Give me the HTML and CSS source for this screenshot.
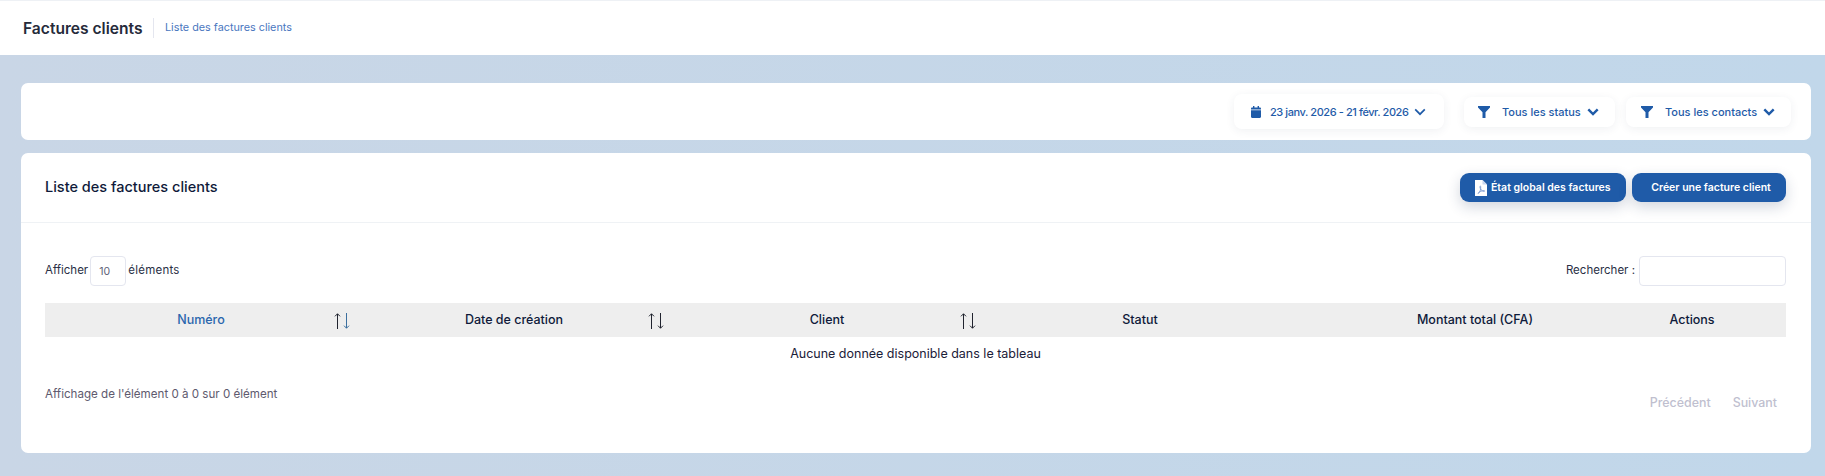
FILE: index.html
```html
<!DOCTYPE html>
<html lang="fr">
<head>
<meta charset="utf-8">
<title>Factures clients</title>
<link rel="stylesheet" href="styles.css">
</head>
<body>
<header class="topbar">
  <h1 class="page-title">Factures clients</h1>
  <span class="crumb">Liste des factures clients</span>
</header>
<main class="content">
  <section class="card filters">
    <button class="filter filter-date">
      <svg class="ico-cal" viewBox="0 0 10 12"><path d="M2 0h1.400v1.400h3.200V0H8v1.400h.8c.7 0 1.200.5 1.200 1.200V3.600H0V2.600c0-.7.5-1.200 1.200-1.200H2zM0 4.300h10v6.500c0 .7-.5 1.200-1.200 1.200H1.200C.5 12 0 11.500 0 10.800z"/></svg>
      <span class="filter-text">23 janv. 2026 - 21 févr. 2026</span>
      <svg class="ico-chev thin" viewBox="0 0 12 8"><path d="M1.200 1.400 6 6.200l4.800-4.800"/></svg>
    </button>
    <button class="filter filter-status">
      <svg class="ico-funnel" viewBox="0 0 12 12"><path d="M0 0h12v1.500L7.500 6.300V12H4.500V6.300L0 1.500z"/></svg>
      <span class="filter-text">Tous les status</span>
      <svg class="ico-chev" viewBox="0 0 12 8"><path d="M1.300 1.300 6 6l4.700-4.700"/></svg>
    </button>
    <button class="filter filter-contact">
      <svg class="ico-funnel" viewBox="0 0 12 12"><path d="M0 0h12v1.500L7.500 6.300V12H4.500V6.300L0 1.500z"/></svg>
      <span class="filter-text">Tous les contacts</span>
      <svg class="ico-chev" viewBox="0 0 12 8"><path d="M1.300 1.300 6 6l4.700-4.700"/></svg>
    </button>
  </section>

  <section class="card list">
    <div class="list-head">
      <h2 class="list-title">Liste des factures clients</h2>
      <div class="actions">
        <button class="btn btn-pdf">
          <svg class="ico-pdf" viewBox="0 0 12 16"><path fill="#fff" d="M0 0h7.500L12 4.500V16H0z"/><path fill="#c9d6ee" d="M7.500 0v4.500H12z"/><path fill="none" stroke="#7d9bd0" stroke-width=".9" d="M3 13.500c1.800-1 3-4 2.700-6.800-.1-1-.9-.8-.8.300.3 2.200 2 4.200 4 4.400 1 .1 1-.8 0-.8-2-.1-4.500 1-5.900 2.900z"/></svg>
          <span>État global des factures</span>
        </button>
        <button class="btn btn-new">Créer une facture client</button>
      </div>
    </div>
    <div class="list-body">
      <div class="controls">
        <label class="length"><span class="lbl">Afficher</span><span class="select-box">10</span><span class="lbl lbl-wide">éléments</span></label>
        <label class="search"><span class="lbl">Rechercher :</span><span class="search-box"></span></label>
      </div>
      <table class="grid">
        <colgroup>
          <col class="c1"><col class="c2"><col class="c3"><col class="c4"><col class="c5"><col class="c6">
        </colgroup>
        <thead>
          <tr>
            <th class="sorted">Numéro
              <svg class="sort" viewBox="0 0 16 16"><path class="up" d="M3.500 16V.8M1 3.300 3.500.8 6 3.300"/><path class="down" d="M12.500 0v15.200M10 12.700l2.500 2.500 2.500-2.500"/></svg>
            </th>
            <th>Date de création
              <svg class="sort" viewBox="0 0 16 16"><path class="up" d="M3.500 16V.8M1 3.300 3.500.8 6 3.300"/><path class="up" d="M12.500 0v15.200M10 12.700l2.500 2.500 2.500-2.500"/></svg>
            </th>
            <th>Client
              <svg class="sort" viewBox="0 0 16 16"><path class="up" d="M3.500 16V.8M1 3.300 3.500.8 6 3.300"/><path class="up" d="M12.500 0v15.200M10 12.700l2.500 2.500 2.500-2.500"/></svg>
            </th>
            <th>Statut</th>
            <th class="amount">Montant total (CFA)</th>
            <th>Actions</th>
          </tr>
        </thead>
        <tbody>
          <tr><td colspan="6">Aucune donnée disponible dans le tableau</td></tr>
        </tbody>
      </table>
      <div class="table-foot">
        <div class="info">Affichage de l'élément 0 à 0 sur 0 élément</div>
        <nav class="pager"><span>Précédent</span><span>Suivant</span></nav>
      </div>
    </div>
  </section>
</main>
</body>
</html>
```
FILE: styles.css
```css
* { box-sizing: border-box; }
html, body { margin: 0; height: 100%; }
body {
  font-family: Inter, "Open Sans", Arial, sans-serif;
  background: linear-gradient(90deg, #c9d6e6 0%, #c1d7ea 100%);
  color: #181c32;
  overflow: hidden;
}
.topbar {
  height: 55px;
  background: #fff;
  border-top: 1px solid #eef1f5;
  display: flex;
  align-items: center;
  padding: 0 0 0 23px;
}
.page-title {
  margin: 0;
  font-size: 15.600px;
  font-weight: 600;
  color: #252a3a;
  width: 130px;
  white-space: nowrap;
}
.crumb {
  border-left: 1px solid #e4e6ef;
  height: 20px;
  line-height: 20px;
  padding-left: 11px;
  font-size: 10.800px;
  color: #4a77c0;
}
.content {
  padding: 28px 14px 0 21px;
  display: flex;
  flex-direction: column;
  gap: 13px;
}
.card {
  background: #fff;
  border-radius: 7px;
}
.filters {
  height: 57px;
  display: flex;
  align-items: center;
  justify-content: flex-end;
  padding-right: 20px;
}
.filter {
  font: 500 11px Inter, Arial, sans-serif;
  color: #1f5ba8;
  background: #fff;
  border: 0;
  border-radius: 8px;
  box-shadow: 0 2px 10px rgba(40, 60, 90, .07);
  display: flex;
  align-items: center;
  padding: 0;
  white-space: nowrap;
}
.filter-date { width: 210px; height: 35px; padding-left: 17px; margin-right: 20px; }
.filter-status { width: 151px; height: 30px; padding-left: 14px; margin-right: 11px; }
.filter-contact { width: 165px; height: 30px; padding-left: 15px; }
.ico-cal { flex: none; width: 10px; height: 12px; fill: #1f5ba8; margin-right: 9px; }
.ico-funnel { flex: none; width: 12px; height: 12px; fill: #1f5ba8; margin-right: 12px; }
.ico-chev { flex: none; width: 12px; height: 8px; fill: none; stroke: #1f5ba8; stroke-width: 2.400; margin-left: 9px; }
.ico-chev.thin { stroke-width: 1.700; margin-left: 6px; }
.filter-text { flex: none; }
.filter-date .filter-text { width: 138px; letter-spacing: -.42px; }
.filter-status .filter-text { width: 76px; }
.filter-contact .filter-text { width: 89px; }
.list { height: 300px; }
.list-head {
  height: 70px;
  border-bottom: 1px solid #eff2f5;
  display: flex;
  align-items: center;
  justify-content: space-between;
  padding: 0 25px 0 24px;
}
.list-title {
  margin: 0 0 2px;
  font-size: 14.500px;
  font-weight: 500;
  color: #0f1a3a;
}
.actions { display: flex; gap: 6px; }
.btn {
  font: 600 10.500px Inter, Arial, sans-serif;
  color: #fff;
  background: #1f5ba8;
  border: 0;
  border-radius: 9px;
  height: 29px;
  display: flex;
  align-items: center;
  white-space: nowrap;
  box-shadow: 0 5px 14px rgba(30, 50, 90, .2);
}
.btn-pdf { width: 166px; padding: 0 0 0 15px; }
.btn-new { width: 154px; justify-content: center; padding: 0 0 0 4px; }
.ico-pdf { flex: none; width: 12px; height: 16px; margin-right: 4px; }
.list-body { padding: 33px 25px 0 24px; }
.controls {
  display: flex;
  justify-content: space-between;
  align-items: center;
  font-size: 11.500px;
  color: #2a2f45;
}
.length, .search { display: flex; align-items: center; }
.length { gap: 2px; }
.search { gap: 4px; }
.lbl { margin-bottom: 2px; }
.lbl-wide { letter-spacing: .25px; }
.select-box {
  width: 36px;
  height: 30px;
  border: 1px solid #e4e6ef;
  border-radius: 4px;
  display: flex;
  align-items: center;
  padding-left: 8px;
  font-size: 10.500px;
  color: #5e6278;
}
.search-box {
  width: 147px;
  height: 30px;
  border: 1px solid #e4e6ef;
  border-radius: 4px;
}
.grid {
  width: 100%;
  margin-top: 17px;
  border-collapse: collapse;
  table-layout: fixed;
}
.c1 { width: 312px; }
.c2 { width: 314px; }
.c3 { width: 312px; }
.c4 { width: 314px; }
.c5 { width: 301px; }
.c6 { width: 188px; }
.grid th {
  position: relative;
  height: 34px;
  padding: 0 0 2px;
  background: #eeeeee;
  font-size: 12.500px;
  font-weight: 500;
  color: #0f1a3a;
  text-align: center;
}
.grid th.sorted { color: #2a66ad; }
.grid th.amount { text-align: right; padding-right: 65px; white-space: nowrap; }
.sort {
  position: absolute;
  top: 10px;
  right: 7px;
  width: 16px;
  height: 16px;
  fill: none;
  stroke-width: 1;
}
.up { stroke: #20232e; }
.down { stroke: #3b6f9f; }
.grid td {
  height: 33px;
  padding: 0;
  text-align: center;
  font-size: 12.500px;
  color: #1b2038;
}
.table-foot {
  display: flex;
  justify-content: space-between;
  align-items: flex-start;
}
.info {
  margin-top: 16px;
  font-size: 11.600px;
  color: #5e5a6e;
  line-height: 16px;
}
.pager {
  margin-top: 25px;
  display: flex;
  gap: 22px;
  padding-right: 9px;
  font-size: 12.400px;
  font-weight: 500;
  line-height: 16px;
  color: #c0bfcf;
}
```
